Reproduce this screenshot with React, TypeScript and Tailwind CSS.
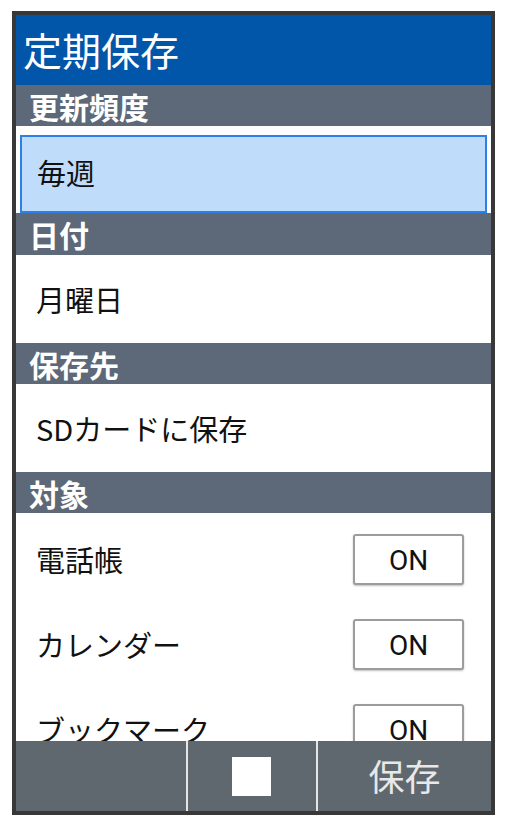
const FONT = { fontFamily: '"Noto Sans CJK JP", "Noto Sans", sans-serif' };

const toggles = ['電話帳', 'カレンダー', 'ブックマーク'];

function SectionHeader({ label, tall }: { label: string; tall?: boolean }) {
  return (
    <div
      className={`flex items-center bg-[#5d6878] pl-[13px] text-[30px] font-bold leading-none text-white ${
        tall ? 'h-[42px]' : 'h-[41px]'
      }`}
    >
      {label}
    </div>
  );
}

function ValueRow({ label }: { label: string }) {
  return (
    <div className="flex h-[88px] items-center bg-white pl-[20px] text-[29px] leading-none text-[#111]">
      {label}
    </div>
  );
}

export default function App() {
  return (
    <div className="min-h-[826px] bg-white pl-[12px] pt-[11px]" style={FONT}>
      <div className="flex h-[804px] w-[483px] flex-col border-4 border-[#383838]">
        <div className="flex h-[70px] shrink-0 items-center bg-[#0156a9] pl-[7px] pb-[2px] text-[39px] leading-none text-white">
          定期保存
        </div>

        <div className="flex-1 overflow-hidden bg-white">
          <SectionHeader label="更新頻度" />
          <div className="h-[87px] px-[4px] pt-[9px]">
            <div className="flex h-[78px] items-center border-2 border-[#2f80e6] bg-[#c0dcfb] pl-[15px] pb-[3px] text-[29px] leading-none text-[#111]">
              毎週
            </div>
          </div>
          <SectionHeader label="日付" tall />
          <ValueRow label="月曜日" />
          <SectionHeader label="保存先" />
          <ValueRow label="SDカードに保存" />
          <SectionHeader label="対象" />
          {toggles.map((t) => (
            <div key={t} className="flex h-[85px] items-start justify-between pl-[20px] pr-[27px] pt-[21px]">
              <span className="text-[29px] leading-[51px] text-[#111]">{t}</span>
              <div
                className="flex h-[51px] w-[111px] items-center justify-center rounded-[3px] border-2 border-[#9c9c9c] bg-white pt-[3px] text-[28px] leading-none text-[#111] shadow-[0_1px_2px_rgba(0,0,0,0.25)]"
                style={{ fontFamily: 'Roboto, "Noto Sans", sans-serif' }}
              >
                ON
              </div>
            </div>
          ))}
        </div>

        <div className="flex h-[70px] shrink-0 bg-[#5f686e]">
          <div className="w-[172px] border-r-2 border-[#e6e6e6]" />
          <div className="flex w-[130px] items-center justify-center border-r-2 border-[#e6e6e6] pr-[2px]">
            <div className="h-[39px] w-[39px] bg-white" />
          </div>
          <div className="flex flex-1 items-center justify-center pb-[2px] text-[36px] leading-none text-[#e8e8e8]">
            保存
          </div>
        </div>
      </div>
    </div>
  );
}
